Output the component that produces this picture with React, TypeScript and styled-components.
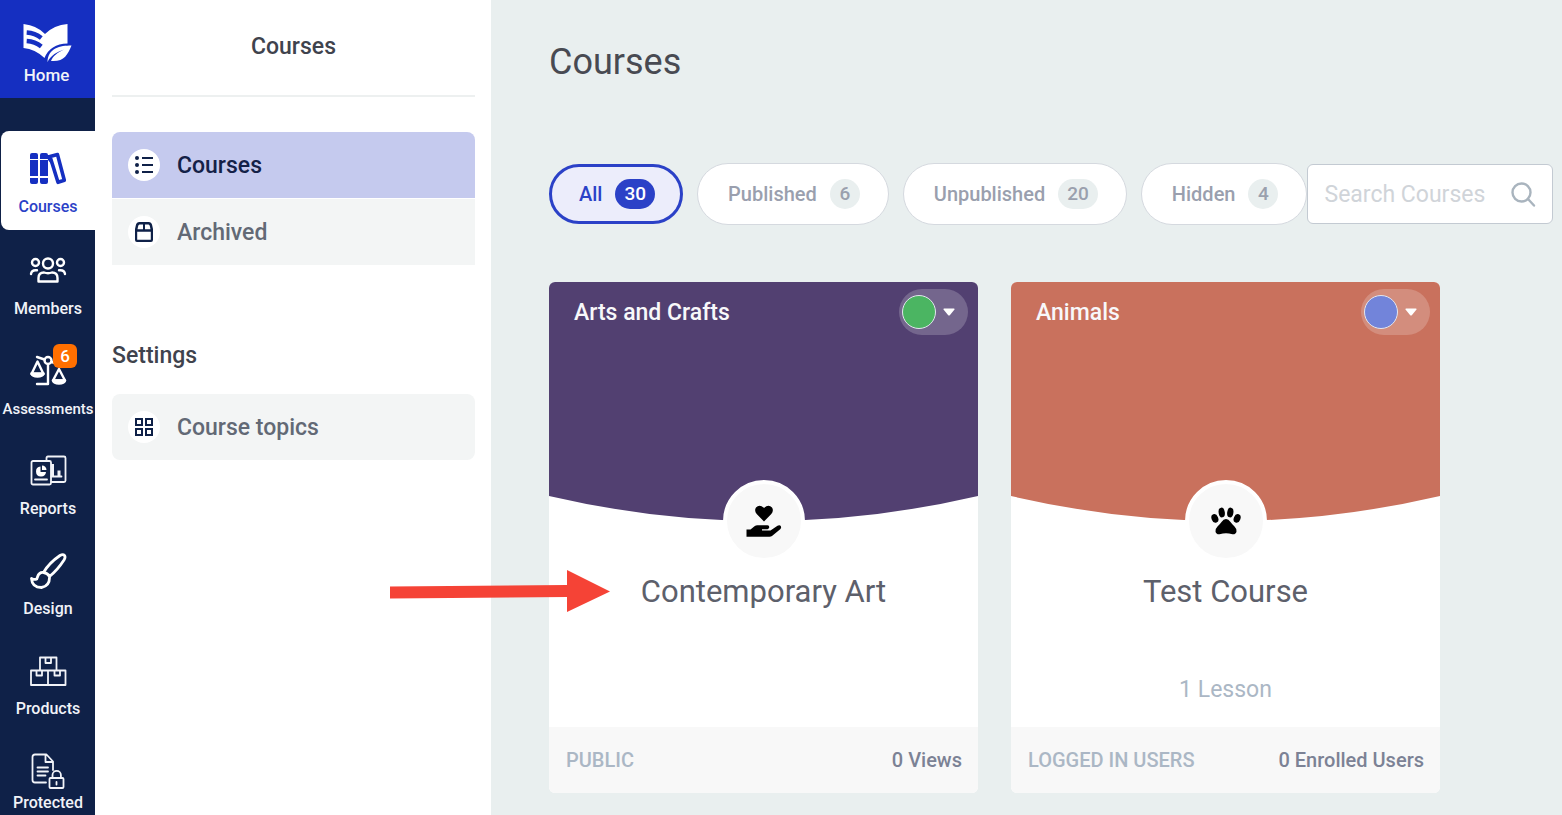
import React from "react";
import styled, { createGlobalStyle, css } from "styled-components";

const color = {
  navy: "#0f2148",
  blue: "#152fc1",
  royal: "#2b41c7",
  page: "#e9efef",
  selected: "#c5caee",
  soft: "#f3f5f5",
  footer: "#f8f8f8",
  ink: "#3f434d",
  muted: "#626975",
};

const GlobalStyle = createGlobalStyle`
  *, *::before, *::after { box-sizing: border-box; }
  body { margin: 0; font-family: Roboto, "Liberation Sans", sans-serif; background: ${color.page}; }
  h1, h2, h3, p { margin: 0; font-weight: 400; }
  a { color: inherit; text-decoration: none; }
  button { font: inherit; cursor: pointer; }
`;

const Page = styled.div`
  display: flex;
  height: 100vh;
  overflow: hidden;
`;

/* ---------- Icon rail ---------- */

const Rail = styled.nav`
  flex: none;
  width: 95px;
  background: ${color.navy};
  overflow: hidden;
`;

const HomeLink = styled.a`
  display: flex;
  flex-direction: column;
  align-items: center;
  height: 98px;
  padding: 23px 2px 0 0;
  margin-bottom: 33px;
  background: ${color.blue};
  color: #f1f3f8;
  font-size: 17px;
  line-height: 20px;
  font-weight: 500;
`;

const RailItem = styled.a<{ $active?: boolean; $compact?: boolean; $small?: boolean }>`
  display: flex;
  flex-direction: column;
  align-items: center;
  gap: ${(p) => (p.$compact ? 4 : 10)}px;
  height: 100px;
  margin-left: 1px;
  padding-top: 20px;
  color: #f1f3f8;
  font-size: ${(p) => (p.$small ? 15 : 16)}px;
  line-height: 20px;
  font-weight: 500;
  ${(p) =>
    p.$active &&
    css`
      height: 99px;
      margin-bottom: 3px;
      border-radius: 8px 0 0 8px;
      background: #fff;
      color: ${color.royal};
    `}
`;

const RailIcon = styled.span`
  position: relative;
  display: block;
  width: 40px;
  height: 36px;
  svg { display: block; }
`;

const Count = styled.span`
  position: absolute;
  top: -9px;
  right: -9px;
  width: 24px;
  height: 24px;
  border-radius: 6px;
  background: #ff6f00;
  color: #fff;
  font-size: 17px;
  line-height: 24px;
  text-align: center;
`;

/* ---------- Section panel ---------- */

const Panel = styled.aside`
  flex: none;
  width: 396px;
  padding: 0 16px 0 17px;
  background: #fff;
`;

const PanelTitle = styled.h2`
  margin-bottom: 35px;
  padding: 32px 0 34px;
  border-bottom: 2px solid #edf0f0;
  color: ${color.ink};
  font-size: 23px;
  line-height: 29px;
  font-weight: 500;
  text-align: center;
`;

const PanelHeading = styled.h3`
  margin: 76px 0 24px;
  color: ${color.ink};
  font-size: 23px;
  line-height: 29px;
  font-weight: 500;
`;

const PanelList = styled.div<{ $rounded?: boolean }>`
  display: grid;
  gap: 1px;
  border-radius: ${(p) => (p.$rounded ? "8px" : "8px 8px 0 0")};
  overflow: hidden;
`;

const PanelLink = styled.a<{ $active?: boolean }>`
  display: flex;
  align-items: center;
  gap: 17px;
  height: 66px;
  padding: 0 16px;
  background: ${(p) => (p.$active ? color.selected : color.soft)};
  color: ${(p) => (p.$active ? "#142147" : color.muted)};
  font-size: 23px;
  font-weight: 500;
`;

const Disc = styled.span`
  display: grid;
  place-items: center;
  width: 32px;
  height: 32px;
  border-radius: 50%;
  background: #fff;
`;

/* ---------- Main area ---------- */

const Main = styled.main`
  flex: 1;
  min-width: 0;
  padding: 42px 9px 0 58px;
  background: ${color.page};
`;

const Title = styled.h1`
  margin-bottom: 81px;
  color: #484a52;
  font-size: 36px;
  line-height: 40px;
`;

const Toolbar = styled.div`
  display: flex;
  align-items: center;
  margin-bottom: 57px;
`;

const Filters = styled.div`
  display: flex;
  align-items: center;
  gap: 14px;
`;

const FilterCount = styled.span<{ $active?: boolean }>`
  min-width: 30px;
  padding: 0 9px;
  border-radius: 16px;
  background: ${(p) => (p.$active ? color.royal : color.page)};
  color: ${(p) => (p.$active ? "#fff" : "#9aa0ad")};
  font-size: 19px;
  line-height: 30px;
  text-align: center;
`;

const FilterButton = styled.button<{ $active?: boolean }>`
  display: flex;
  align-items: center;
  gap: 13px;
  height: ${(p) => (p.$active ? 60 : 62)}px;
  padding: ${(p) => (p.$active ? "0 25px 0 27px" : "0 28px 0 30px")};
  border: ${(p) => (p.$active ? `3px solid ${color.royal}` : "1px solid #d5d9df")};
  border-radius: 31px;
  background: ${(p) => (p.$active ? "#ecedfb" : "#fff")};
  color: ${(p) => (p.$active ? color.royal : "#9a9fae")};
  font-size: 20px;
  font-weight: 500;
`;

const SearchBox = styled.label`
  flex: 1;
  display: flex;
  align-items: center;
  min-width: 0;
  height: 60px;
  padding: 0 16px;
  border: 1px solid #c3cad2;
  border-radius: 6px;
  background: #fff;
`;

const SearchInput = styled.input`
  flex: 1;
  min-width: 0;
  padding: 0;
  border: 0;
  outline: 0;
  background: transparent;
  color: ${color.muted};
  font: 400 23px Roboto, "Liberation Sans", sans-serif;
  &::placeholder { color: #d0d4d9; opacity: 1; }
`;

const Cards = styled.div`
  display: flex;
  flex-wrap: wrap;
  gap: 33px;
`;

const Card = styled.article`
  display: flex;
  flex-direction: column;
  width: 429px;
  border-radius: 6px;
  background: #fff;
  overflow: hidden;
`;

const Cover = styled.div`
  position: relative;
  height: 239px;
`;

const Curve = styled.svg`
  position: absolute;
  inset: 0;
  width: 100%;
  height: 100%;
`;

const CoverBar = styled.div`
  position: relative;
  display: flex;
  align-items: center;
  justify-content: space-between;
  padding: 7px 10px 0 25px;
  color: #f8f8fa;
  font-size: 23px;
  font-weight: 500;
`;

const StatusButton = styled.button`
  display: flex;
  align-items: center;
  gap: 7px;
  width: 69px;
  height: 46px;
  padding: 0 3px;
  border: 0;
  border-radius: 23px;
  background: rgba(255, 255, 255, 0.2);
`;

const Dot = styled.span<{ $color: string }>`
  width: 34px;
  height: 34px;
  border: 1px solid #e3e5ee;
  border-radius: 50%;
  background: ${(p) => p.$color};
`;

const Emblem = styled.span`
  position: absolute;
  left: 50%;
  bottom: -41px;
  display: grid;
  place-items: center;
  width: 82px;
  height: 82px;
  margin-left: -41px;
  border: 4px solid #fff;
  border-radius: 50%;
  background: #f8f8f8;
  color: #000;
`;

const CardBody = styled.div`
  display: flex;
  flex-direction: column;
  align-items: center;
  justify-content: space-between;
  height: 206px;
  padding: 51px 16px 23px;
`;

const CardTitle = styled.h2`
  color: #5d606b;
  font-size: 31px;
  line-height: 40px;
`;

const Lessons = styled.p`
  color: #abb7c5;
  font-size: 23px;
  line-height: 29px;
`;

const CardFooter = styled.footer`
  display: flex;
  align-items: center;
  justify-content: space-between;
  height: 66px;
  padding: 0 16px 0 17px;
  background: ${color.footer};
  color: #7c8295;
  font-size: 20px;
  font-weight: 500;
`;

const Access = styled.span`
  color: #abb7c5;
`;

const Pointer = styled.svg`
  position: absolute;
  left: 390px;
  top: 569px;
  pointer-events: none;
`;

/* ---------- Drawings ---------- */

const Logo = () => (
  <svg width="49" height="42" viewBox="-1 -1 49 42" overflow="visible">
    <path fill="#fff" d="M.5 0Q14 1.500 22 10Q31 1 44.500 0V19.500Q27 20 21.500 34Q12 25 .5 24Z" />
    <path fill="none" stroke={color.blue} strokeWidth="4.500" d="M3.700 8.500Q12 9 18.300 14M3.700 17Q12 17.500 18.300 22.500" />
    <path fill="#fff" d="M48.500 21.500C37 21.500 25 24 24.500 38C28 31 34 28 41 25.500C34 29 30 32 28 37C41 38 44.500 31 48.500 21.500Z" />
  </svg>
);

const BooksIcon = () => (
  <svg width="40" height="36" fill={color.blue}>
    <path d="M4 2h4q2 0 2 2v4H2V4q0-2 2-2zM14 2h4q2 0 2 2v4h-8V4q0-2 2-2zM2 9h8v16H2zM12 9h8v16h-8zM2 27h8v4q0 2-2 2H4q-2 0-2-2zM12 27h8v4q0 2-2 2h-4q-2 0-2-2z" />
    <path
      fill="none"
      stroke={color.blue}
      strokeWidth="3.600"
      strokeLinejoin="round"
      d="M22 5.500L29.500 3.600L36.300 29.300L30 31.300Z"
    />
    <path d="M19 4h3l3 11l-5-6z" />
  </svg>
);

const MembersIcon = () => (
  <svg width="40" height="36" fill="none" stroke="#fff" strokeWidth="2.400" strokeLinecap="round" strokeLinejoin="round">
    <circle cx="20" cy="10.500" r="5" />
    <circle cx="7.500" cy="9.500" r="3.500" />
    <circle cx="32.500" cy="9.500" r="3.500" />
    <path d="M10.500 28.500v-3.500q0-5.500 5.500-5.500q4 1.500 8 0q5.500 0 5.500 5.500v3.500zM3 21q.5-3.700 4.500-3.700h1.500M37 21q-.5-3.700-4.500-3.700h-1.500" />
  </svg>
);

const ScalesIcon = () => (
  <svg width="40" height="36" fill="none" stroke="#fff" strokeWidth="2.400" strokeLinecap="round" strokeLinejoin="round">
    <path d="M9 4l7.500 2.500M20 12v19H9M23.500 9l7 2" />
    <circle cx="20" cy="7.500" r="3.500" />
    <path d="M9.500 8.500l-6 12.500h12z" />
    <path fill="#fff" d="M3.500 20.500h12q-1 3-6 3t-6-3z" />
    <path d="M31 16l-6 11.500h12z" />
    <path fill="#fff" d="M25 27.500h12q-1 3-6 3t-6-3z" />
  </svg>
);

const ReportsIcon = () => (
  <svg width="40" height="36" fill="none" stroke="#f1f3f8" strokeWidth="1.800" strokeLinejoin="round" strokeLinecap="round">
    <path d="M18.500 7.500V5q0-1.500 1.500-1.500h16q1.500 0 1.500 1.500v22.500q0 1.500-1.500 1.500H23.500" />
    <rect x="3.500" y="8" width="19.500" height="23.500" rx="1.500" />
    <path d="M7 26.500h12" />
    <path strokeWidth="3" strokeLinecap="butt" d="M24.500 11v12.500M31 17.500v6" />
    <path d="M23.500 23.500h10" />
    <path fill="#fff" stroke="none" d="M12.500 13.500v5.500h5.500a5 5 0 1 1-5.500-5.500zM14 12.500a4.500 4.500 0 0 1 4.500 4.500h-4.500z" />
  </svg>
);

const BrushIcon = () => (
  <svg width="40" height="38" fill="none" stroke="#fff" strokeWidth="2.800" strokeLinecap="round" strokeLinejoin="round">
    <path d="M15.500 19.500Q21 10 32 2.500Q35 .8 36.500 2.500Q37.800 4 36 7Q29.500 17 21.500 23.500M15.500 19.500Q19.500 20 21.500 23.500M15.500 19.500Q11 19 9.500 24Q9 28 3.500 25.500Q4 34.500 13.500 34.500Q22 33 21.500 23.500" />
  </svg>
);

const ProductsIcon = () => (
  <svg width="40" height="36" fill="none" stroke="#f1f3f8" strokeWidth="1.800" strokeLinejoin="round">
    <path d="M12 17V4.500h16.500V17M17.500 4.500v5.500h5.500V4.500M3 17.500h34.500V32H3zM20 17.500V32M8.500 17.500v5H14v-5M26.500 17.500v5H32v-5" />
  </svg>
);

const ProtectedIcon = () => (
  <svg width="40" height="38" fill="none" stroke="#f1f3f8" strokeWidth="1.800" strokeLinejoin="round" strokeLinecap="round">
    <path d="M18 29.500H7q-2.500 0-2.500-2.500V4Q4.500 1.500 7 1.500h11.500L25 8.500V17M17.500 2v7H25M9.500 14.500H20M9.500 18.500H20M9.500 22.500h8" />
    <rect x="21.500" y="25" width="14" height="10" rx="1" />
    <path d="M24.500 25v-3a4.200 4.200 0 0 1 8.400 0v3M28.500 29v2.500" />
  </svg>
);

const ListIcon = () => (
  <svg width="18" height="18" fill={color.navy} stroke={color.navy} strokeWidth="2">
    {[2, 9, 16].map((y) => (
      <React.Fragment key={y}>
        <circle cx="2" cy={y} r="2" stroke="none" />
        <path d={`M7 ${y}h11`} />
      </React.Fragment>
    ))}
  </svg>
);

const BoxIcon = () => (
  <svg width="18" height="20" fill={color.navy}>
    <path
      fillRule="evenodd"
      d="M4 0h10q2.500 0 3 2.500L18 7v11q0 2-2 2H2q-2 0-2-2V7l1-4.500Q1.500 0 4 0zM4.500 2.500Q3.500 2.500 3.200 4L2.500 7.200H8V2.500zM10 2.500V7.200H15.500L14.800 4Q14.500 2.500 13.500 2.500zM2.200 9.700V17.800H15.800V9.700z"
    />
  </svg>
);

const GridIcon = () => (
  <svg width="18" height="18" fill="none" stroke={color.navy} strokeWidth="2">
    <path d="M1 1h6v6H1zM11 1h6v6h-6zM1 11h6v6H1zM11 11h6v6h-6z" />
  </svg>
);

const SearchIcon = () => (
  <svg width="26" height="26" fill="none" stroke="#a9b4be" strokeWidth="2.400" strokeLinecap="round">
    <circle cx="11.500" cy="11.500" r="9" />
    <path d="M18 18l6 6.500" />
  </svg>
);

const HeartHandIcon = () => (
  <svg width="36" height="34" viewBox="0 0 36 34" fill="currentColor">
    <path d="M18 17.500L10.700 10Q8 6.500 10 3.500Q13.500 0 18 4Q22.500 0 26 3.500Q28 6.500 25.300 10Z" />
    <path d="M.5 25.500H4.500L8.500 22.200Q9.800 21.300 11.500 21.300H21.500Q23.300 21.500 23.300 23.300Q23 25 21.500 25.200H16V26.500H24.500L31.500 21.700Q34 20.500 35 22.500Q35.500 24 34.200 25.200L26 32Q25 32.800 23.500 32.800H.5Z" />
  </svg>
);

const PawIcon = () => (
  <svg width="30" height="28" viewBox="0 0 30 28" fill="currentColor">
    <ellipse cx="3.900" cy="11.400" rx="3.300" ry="4.500" transform="rotate(-22 3.900 11.400)" />
    <ellipse cx="10.700" cy="5.500" rx="3.100" ry="4.900" transform="rotate(-8 10.700 5.500)" />
    <ellipse cx="19.300" cy="5.500" rx="3.100" ry="4.900" transform="rotate(8 19.300 5.500)" />
    <ellipse cx="26.100" cy="11.400" rx="3.300" ry="4.500" transform="rotate(22 26.100 11.400)" />
    <path d="M15 12Q17.500 12 19.500 15Q21 17.200 23.500 19.500Q26 22 25.500 24.500Q25 27.500 21.500 27.300Q18 26.300 15 26.300Q12 26.300 8.500 27.300Q5 27.500 4.500 24.500Q4 22 6.500 19.500Q9 17.200 10.500 15Q12.500 12 15 12Z" />
  </svg>
);

const Caret = () => (
  <svg width="12" height="8" fill="#fff">
    <path d="M1 .5h10q1 .4.500 1L7 7q-1 1-2 0L.5 1.500Q0 .9 1 .5z" />
  </svg>
);

/* ---------- Content ---------- */

const railItems = [
  { label: "Courses", icon: <BooksIcon />, active: true },
  { label: "Members", icon: <MembersIcon /> },
  { label: "Assessments", icon: <ScalesIcon />, count: 6, small: true },
  { label: "Reports", icon: <ReportsIcon /> },
  { label: "Design", icon: <BrushIcon /> },
  { label: "Products", icon: <ProductsIcon /> },
  { label: "Protected", icon: <ProtectedIcon />, compact: true },
];

const filters = [
  { label: "All", count: 30, active: true },
  { label: "Published", count: 6 },
  { label: "Unpublished", count: 20 },
  { label: "Hidden", count: 4 },
];

const courses = [
  {
    topic: "Arts and Crafts",
    title: "Contemporary Art",
    cover: "#524071",
    status: "#4bb562",
    icon: <HeartHandIcon />,
    access: "PUBLIC",
    stat: "0 Views",
  },
  {
    topic: "Animals",
    title: "Test Course",
    cover: "#c9715d",
    status: "#7284da",
    icon: <PawIcon />,
    lessons: "1 Lesson",
    access: "LOGGED IN USERS",
    stat: "0 Enrolled Users",
  },
];

export default function App() {
  return (
    <Page>
      <GlobalStyle />
      <Rail>
        <HomeLink href="#home">
          <Logo />
          Home
        </HomeLink>
        {railItems.map((item) => (
          <RailItem
            key={item.label}
            href={`#${item.label.toLowerCase()}`}
            $active={item.active}
            $compact={item.compact}
            $small={item.small}
          >
            <RailIcon>
              {item.icon}
              {item.count && <Count>{item.count}</Count>}
            </RailIcon>
            {item.label}
          </RailItem>
        ))}
      </Rail>

      <Panel>
        <PanelTitle>Courses</PanelTitle>
        <PanelList>
          <PanelLink href="#courses" $active>
            <Disc><ListIcon /></Disc>
            Courses
          </PanelLink>
          <PanelLink href="#archived">
            <Disc><BoxIcon /></Disc>
            Archived
          </PanelLink>
        </PanelList>
        <PanelHeading>Settings</PanelHeading>
        <PanelList $rounded>
          <PanelLink href="#topics">
            <Disc><GridIcon /></Disc>
            Course topics
          </PanelLink>
        </PanelList>
      </Panel>

      <Main>
        <Title>Courses</Title>
        <Toolbar>
          <Filters>
            {filters.map((f) => (
              <FilterButton key={f.label} type="button" $active={f.active}>
                {f.label}
                <FilterCount $active={f.active}>{f.count}</FilterCount>
              </FilterButton>
            ))}
          </Filters>
          <SearchBox>
            <SearchInput type="text" placeholder="Search Courses" aria-label="Search Courses" />
            <SearchIcon />
          </SearchBox>
        </Toolbar>
        <Cards>
          {courses.map((c) => (
            <Card key={c.title}>
              <Cover>
                <Curve viewBox="0 0 430 239" preserveAspectRatio="none">
                  <path fill={c.cover} d="M0 0H430V214Q215 264 0 214Z" />
                </Curve>
                <CoverBar>
                  {c.topic}
                  <StatusButton type="button" aria-label={`${c.title} status`}>
                    <Dot $color={c.status} />
                    <Caret />
                  </StatusButton>
                </CoverBar>
                <Emblem>{c.icon}</Emblem>
              </Cover>
              <CardBody>
                <CardTitle>{c.title}</CardTitle>
                {c.lessons && <Lessons>{c.lessons}</Lessons>}
              </CardBody>
              <CardFooter>
                <Access>{c.access}</Access>
                {c.stat}
              </CardFooter>
            </Card>
          ))}
        </Cards>
      </Main>

      <Pointer width="222" height="44" fill="#f54336" aria-hidden="true">
        <path d="M0 17.500L177 16V1L220 22.500L177 43V28L0 29.500Z" />
      </Pointer>
    </Page>
  );
}
